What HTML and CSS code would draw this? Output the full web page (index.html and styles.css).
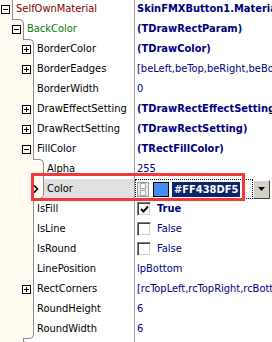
FILE: index.html
```html
<!DOCTYPE html>
<html lang="en">
<head>
    <meta charset="UTF-8">
    <meta name="viewport" content="width=device-width, initial-scale=1.0">
    <title>Object Inspector</title>
    <link rel="stylesheet" href="styles.css">
</head>
<body>
    <div class="inspector">
        <div class="rows">
            <div class="row">
                <div class="prop">
                    <div class="gutter lv0"><span class="edge"></span><span class="exp minus"></span></div>
                    <div class="name parent">SelfOwnMaterial</div>
                </div>
                <div class="value bold">SkinFMXButton1.Material</div>
            </div>
            <div class="row">
                <div class="prop">
                    <div class="gutter lv1"><span class="edge in from0"></span><span class="exp minus"></span></div>
                    <div class="name sub">BackColor</div>
                </div>
                <div class="value bold">(TDrawRectParam)</div>
            </div>
            <div class="row">
                <div class="prop">
                    <div class="gutter lv2"><span class="edge in from1"></span><span class="exp plus"></span></div>
                    <div class="name">BorderColor</div>
                </div>
                <div class="value bold">(TDrawColor)</div>
            </div>
            <div class="row">
                <div class="prop">
                    <div class="gutter lv2"><span class="edge"></span><span class="exp plus"></span></div>
                    <div class="name">BorderEadges</div>
                </div>
                <div class="value">[beLeft,beTop,beRight,beBottom]</div>
            </div>
            <div class="row">
                <div class="prop">
                    <div class="gutter lv2"><span class="edge"></span></div>
                    <div class="name">BorderWidth</div>
                </div>
                <div class="value">0</div>
            </div>
            <div class="row">
                <div class="prop">
                    <div class="gutter lv2"><span class="edge"></span><span class="exp plus"></span></div>
                    <div class="name">DrawEffectSetting</div>
                </div>
                <div class="value bold">(TDrawRectEffectSetting)</div>
            </div>
            <div class="row">
                <div class="prop">
                    <div class="gutter lv2"><span class="edge"></span><span class="exp plus"></span></div>
                    <div class="name">DrawRectSetting</div>
                </div>
                <div class="value bold">(TDrawRectSetting)</div>
            </div>
            <div class="row">
                <div class="prop">
                    <div class="gutter lv2"><span class="edge"></span><span class="exp minus"></span></div>
                    <div class="name">FillColor</div>
                </div>
                <div class="value bold">(TRectFillColor)</div>
            </div>
            <div class="row">
                <div class="prop">
                    <div class="gutter lv3"><span class="edge in from2"></span></div>
                    <div class="name">Alpha</div>
                </div>
                <div class="value">255</div>
            </div>
            <div class="row selected">
                <div class="prop">
                    <div class="gutter lv3">
                        <span class="edge out to2"></span>
                        <svg class="pointer" width="6" height="8" viewBox="0 0 6 8"><path d="M1 0.5 L4.5 4 L1 7.5" fill="none" stroke="#000" stroke-width="1.6"/></svg>
                    </div>
                    <div class="name">Color</div>
                </div>
                <div class="value editor">
                    <div class="edit-box">
                        <svg class="film" width="12" height="15" viewBox="0 0 12 15">
                            <rect x="0.5" y="0.5" width="11" height="14" fill="#e4e4e4" stroke="#9a9a9a"/>
                            <rect x="3.5" y="1.5" width="5" height="5" fill="#fafafa" stroke="#a8a8a8"/>
                            <rect x="3.5" y="8.5" width="5" height="5" fill="#fafafa" stroke="#a8a8a8"/>
                            <path d="M1 2.5h1.5M1 5.5h1.5M1 8.5h1.5M1 11.5h1.5M9.5 2.5h1.5M9.5 5.5h1.5M9.5 8.5h1.5M9.5 11.5h1.5" stroke="#ffffff"/>
                        </svg>
                        <span class="swatch"></span>
                        <span class="hex">#FF438DF5</span>
                    </div>
                    <div class="drop">
                        <svg width="7" height="4" viewBox="0 0 7 4"><path d="M0 0h7L3.5 4z" fill="#000"/></svg>
                    </div>
                </div>
            </div>
            <div class="row">
                <div class="prop">
                    <div class="gutter lv2"><span class="edge"></span></div>
                    <div class="name">IsFill</div>
                </div>
                <div class="value">
                    <span class="check">
                        <svg width="9" height="9" viewBox="0 0 9 9"><path d="M1 4 L3.5 6.5 L8 1.5" fill="none" stroke="#000" stroke-width="2"/></svg>
                    </span>
                    <span class="bold">True</span>
                </div>
            </div>
            <div class="row">
                <div class="prop">
                    <div class="gutter lv2"><span class="edge"></span></div>
                    <div class="name">IsLine</div>
                </div>
                <div class="value"><span class="check"></span>False</div>
            </div>
            <div class="row">
                <div class="prop">
                    <div class="gutter lv2"><span class="edge"></span></div>
                    <div class="name">IsRound</div>
                </div>
                <div class="value"><span class="check"></span>False</div>
            </div>
            <div class="row">
                <div class="prop">
                    <div class="gutter lv2"><span class="edge"></span></div>
                    <div class="name">LinePosition</div>
                </div>
                <div class="value">lpBottom</div>
            </div>
            <div class="row">
                <div class="prop">
                    <div class="gutter lv2"><span class="edge"></span><span class="exp plus"></span></div>
                    <div class="name">RectCorners</div>
                </div>
                <div class="value">[rcTopLeft,rcTopRight,rcBottomLeft,rcBottomRight]</div>
            </div>
            <div class="row">
                <div class="prop">
                    <div class="gutter lv2"><span class="edge"></span></div>
                    <div class="name">RoundHeight</div>
                </div>
                <div class="value">6</div>
            </div>
            <div class="row">
                <div class="prop">
                    <div class="gutter lv2"><span class="edge out to1"></span></div>
                    <div class="name">RoundWidth</div>
                </div>
                <div class="value">6</div>
            </div>
            <div class="row">
                <div class="prop">
                    <div class="gutter lv1"><span class="edge"></span></div>
                    <div class="name sub"></div>
                </div>
                <div class="value"></div>
            </div>
        </div>
        <div class="callout"></div>
    </div>
</body>
</html>
```

FILE: styles.css
```css
:root {
    --gutter-bg: #fffbf0;
    --tree-line: #8c8c8c;
    --value-color: #000080;
    --grid-line: #a0a0a0;
}

body {
    margin: 0;
    background: #ffffff;
    font-family: "DejaVu Sans Condensed", "DejaVu Sans", sans-serif;
    font-size: 11px;
    color: #000000;
}

.inspector {
    position: relative;
    width: 272px;
    height: 342px;
    overflow: hidden;
    background: #ffffff;
}

.rows {
    margin-top: -1px;
}

.row {
    display: flex;
    height: 20px;
    line-height: 20px;
}

.prop {
    display: flex;
    flex: none;
    width: 134px;
}

/* tree gutter: cream area left of the outline */
.gutter {
    display: grid;
    flex: none;
    background: var(--gutter-bg);
}

.gutter > * {
    grid-area: 1 / 1;
}

.lv0 { width: 13px; }
.lv1 { width: 24px; }
.lv2 { width: 34px; }
.lv3 { width: 44px; }

.edge {
    border-right: 1px solid var(--tree-line);
}

.edge.in {
    border-top: 1px solid var(--tree-line);
    border-top-right-radius: 5px;
}

.edge.out {
    border-bottom: 1px solid var(--tree-line);
    border-bottom-right-radius: 5px;
}

.from0, .to0 { margin-left: 12px; }
.from1, .to1 { margin-left: 23px; }
.from2, .to2 { margin-left: 33px; }

.exp {
    justify-self: end;
    align-self: center;
    width: 9px;
    height: 9px;
    margin-right: 3px;
    box-sizing: border-box;
    border: 1px solid #000000;
    background-color: #ffffff;
}

.exp.minus {
    background: linear-gradient(#000, #000) center / 5px 1px no-repeat, #ffffff;
}

.exp.plus {
    background:
        linear-gradient(#000, #000) center / 5px 1px no-repeat,
        linear-gradient(#000, #000) center / 1px 5px no-repeat,
        #ffffff;
}

.pointer {
    justify-self: start;
    align-self: center;
    margin-left: 33px;
}

.name {
    flex: 1;
    padding-left: 3px;
    white-space: nowrap;
    overflow: hidden;
}

.name.parent {
    color: #800000;
}

.name.sub {
    color: #008000;
}

.selected .name {
    background: #e0e0e0;
}

.value {
    display: flex;
    align-items: center;
    flex: 1;
    min-width: 0;
    padding-left: 2px;
    border-left: 1px solid var(--grid-line);
    color: var(--value-color);
    white-space: nowrap;
    overflow: hidden;
}

.bold {
    font-weight: bold;
}

/* inline color editor */
.value.editor {
    padding-left: 0;
}

.edit-box {
    display: flex;
    align-items: center;
    width: 118px;
    height: 20px;
    box-sizing: border-box;
    border: 1px dotted #000000;
    padding-left: 1px;
}

.swatch {
    width: 16px;
    height: 15px;
    margin-left: 4px;
    box-sizing: border-box;
    border: 1px solid #000000;
    background: #438df5;
}

.hex {
    margin-left: 3px;
    padding: 0 2px;
    line-height: 15px;
    background: #0a246a;
    color: #ffffff;
    font-weight: bold;
}

.drop {
    display: flex;
    align-items: center;
    justify-content: center;
    width: 17px;
    height: 19px;
    box-sizing: border-box;
    background: #d4d0c8;
    border: 1px solid;
    border-color: #ffffff #404040 #404040 #ffffff;
}

.check {
    display: flex;
    align-items: center;
    justify-content: center;
    width: 14px;
    height: 14px;
    margin-right: 6px;
    box-sizing: border-box;
    border: 1px solid;
    border-color: #808080 #ffffff #ffffff #808080;
    box-shadow: inset 1px 1px #404040, inset -1px -1px #d4d0c8;
    background: #ffffff;
}

/* red annotation frame drawn over the screenshot */
.callout {
    position: absolute;
    left: 31px;
    top: 173px;
    width: 214px;
    height: 28px;
    box-sizing: border-box;
    border: 3px solid #ee3a3a;
}
```
